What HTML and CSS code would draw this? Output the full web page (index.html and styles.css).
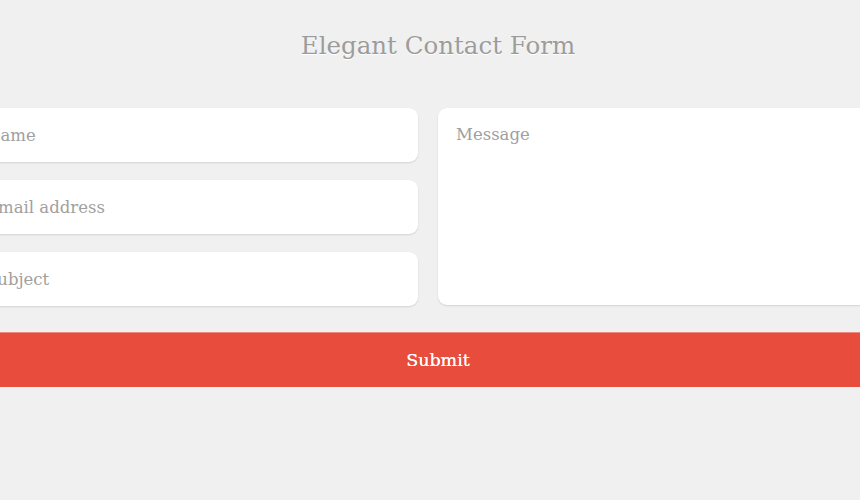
FILE: index.html
```html
<!DOCTYPE html>
<html lang="en">
<head>
  <meta charset="UTF-8">
  <meta name="viewport" content="width=device-width, initial-scale=1.0">
  <title>Elegant Contact Form</title>
  <link rel="stylesheet" href="styles.css">
</head>
<body>
  <div class="wrapper">
    <h1>Elegant Contact Form</h1>
    <form id="contactForm" class="contact-form">
      <div class="fields">
        <div class="col-left">
          <input type="text" name="name" placeholder="Name">
          <input type="email" name="email" placeholder="Email address">
          <input type="text" name="subject" placeholder="Subject">
        </div>
        <div class="col-right">
          <textarea name="message" placeholder="Message"></textarea>
        </div>
      </div>
      <button type="submit" class="submit-btn">Submit</button>
    </form>
  </div>
</body>
</html>
```

FILE: styles.css
```css
body {
  margin: 0;
  background-color: #f0f0f0;
  font-family: "DejaVu Serif", "Liberation Serif", serif;
  overflow: hidden;
}

.wrapper {
  width: 940px;
  margin-left: -32px;
}

h1 {
  margin: 0;
  padding-top: 31px;
  height: 108px;
  box-sizing: border-box;
  text-align: center;
  font-weight: normal;
  font-size: 24.5px;
  color: #9c9c9c;
  text-shadow: 0 1px 0 #ffffff;
}

.fields {
  display: flex;
}

.col-left {
  width: 450px;
  padding-right: 20px;
  display: flex;
  flex-direction: column;
  gap: 18px;
}

.col-right {
  width: 450px;
  padding-right: 20px;
}

input,
textarea {
  display: block;
  width: 100%;
  box-sizing: border-box;
  border: none;
  border-radius: 9px;
  background: #ffffff;
  box-shadow: 0 1px 2px rgba(0, 0, 0, 0.12);
  font-family: inherit;
  font-size: 16.5px;
  color: #888;
  padding: 0 18px;
  outline: none;
}

input {
  height: 54px;
}

textarea {
  height: 197px;
  padding-top: 17px;
  resize: none;
}

::placeholder {
  color: #a0a0a0;
}

.submit-btn {
  display: block;
  width: 100%;
  height: 55px;
  margin-top: 26px;
  border: none;
  border-top: 1px solid #ec8a80;
  background-color: #e74c3c;
  box-shadow: 0 1px 1px rgba(0, 0, 0, 0.08);
  color: #ffffff;
  font-family: inherit;
  font-size: 17.5px;
  text-shadow: 0 0 0.4px #ffffff;
  cursor: pointer;
}
```
